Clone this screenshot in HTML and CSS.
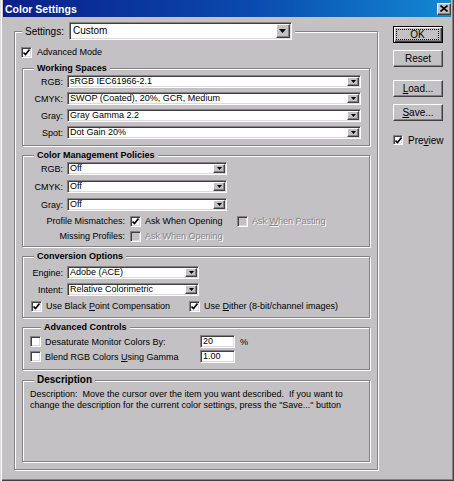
FILE: index.html
```html
<!DOCTYPE html>
<html lang="en">
  <head>
    <meta charset="UTF-8" />
    <title>Color Settings</title>
    <link rel="stylesheet" href="styles.css">
  </head>
  <body>
    <div class="window">
      <div class="titlebar">
        <span class="title">Color Settings</span>
        <span class="close">
          <svg width="8" height="7" viewBox="0 0 8 7"><path d="M0.5 0.5 L7.5 6.5 M7.5 0.5 L0.5 6.5" stroke="#000" stroke-width="1.6" fill="none"/></svg>
        </span>
      </div>

      <div class="dialog">
        <fieldset class="group outer">
          <legend>
            <span>Settings:</span>
            <div class="combo big">
              <span class="value">Custom</span>
              <span class="drop"><svg width="7" height="4" viewBox="0 0 7 4"><path d="M0 0h7L3.5 4z" fill="#000"/></svg></span>
            </div>
          </legend>

          <div class="outer-body">
            <div class="opt advanced">
              <span class="check on"><svg width="7" height="7" viewBox="0 0 7 7"><path d="M0.5 3.5 L2.5 5.5 L6.5 0.5" stroke="#000" stroke-width="1.6" fill="none"/></svg></span>
              <span>Advanced Mode</span>
            </div>

            <fieldset class="group ws">
              <legend>Working Spaces</legend>
              <div class="fields">
                <span class="lbl">RGB:</span>
                <div class="combo"><span class="value">sRGB IEC61966-2.1</span><span class="drop"><svg width="5" height="3" viewBox="0 0 5 3"><path d="M0 0h5L2.5 3z"/></svg></span></div>
                <span class="lbl">CMYK:</span>
                <div class="combo"><span class="value">SWOP (Coated), 20%, GCR, Medium</span><span class="drop"><svg width="5" height="3" viewBox="0 0 5 3"><path d="M0 0h5L2.5 3z"/></svg></span></div>
                <span class="lbl">Gray:</span>
                <div class="combo"><span class="value">Gray Gamma 2.2</span><span class="drop"><svg width="5" height="3" viewBox="0 0 5 3"><path d="M0 0h5L2.5 3z"/></svg></span></div>
                <span class="lbl">Spot:</span>
                <div class="combo"><span class="value">Dot Gain 20%</span><span class="drop"><svg width="5" height="3" viewBox="0 0 5 3"><path d="M0 0h5L2.5 3z"/></svg></span></div>
              </div>
            </fieldset>

            <fieldset class="group cmp">
              <legend>Color Management Policies</legend>
              <div class="fields">
                <span class="lbl">RGB:</span>
                <div class="combo"><span class="value">Off</span><span class="drop"><svg width="5" height="3" viewBox="0 0 5 3"><path d="M0 0h5L2.5 3z"/></svg></span></div>
                <span class="lbl">CMYK:</span>
                <div class="combo"><span class="value">Off</span><span class="drop"><svg width="5" height="3" viewBox="0 0 5 3"><path d="M0 0h5L2.5 3z"/></svg></span></div>
                <span class="lbl">Gray:</span>
                <div class="combo"><span class="value">Off</span><span class="drop"><svg width="5" height="3" viewBox="0 0 5 3"><path d="M0 0h5L2.5 3z"/></svg></span></div>
              </div>
              <div class="policy">
                <span class="lbl">Profile Mismatches:</span>
                <div class="opt">
                  <span class="check on"><svg width="7" height="7" viewBox="0 0 7 7"><path d="M0.5 3.5 L2.5 5.5 L6.5 0.5" stroke="#000" stroke-width="1.6" fill="none"/></svg></span>
                  <span>Ask When Opening</span>
                </div>
                <div class="opt off">
                  <span class="check"></span>
                  <span>Ask <u>W</u>hen Pasting</span>
                </div>
                <span class="lbl">Missing Profiles:</span>
                <div class="opt off">
                  <span class="check"></span>
                  <span>Ask When Opening</span>
                </div>
              </div>
            </fieldset>

            <fieldset class="group conv">
              <legend>Conversion Options</legend>
              <div class="fields">
                <span class="lbl">Engine:</span>
                <div class="combo"><span class="value">Adobe (ACE)</span><span class="drop"><svg width="5" height="3" viewBox="0 0 5 3"><path d="M0 0h5L2.5 3z"/></svg></span></div>
                <span class="lbl">Intent:</span>
                <div class="combo"><span class="value">Relative Colorimetric</span><span class="drop"><svg width="5" height="3" viewBox="0 0 5 3"><path d="M0 0h5L2.5 3z"/></svg></span></div>
              </div>
              <div class="checks">
                <div class="opt bpc">
                  <span class="check on"><svg width="7" height="7" viewBox="0 0 7 7"><path d="M0.5 3.5 L2.5 5.5 L6.5 0.5" stroke="#000" stroke-width="1.6" fill="none"/></svg></span>
                  <span>Use Black <u>P</u>oint Compensation</span>
                </div>
                <div class="opt">
                  <span class="check on"><svg width="7" height="7" viewBox="0 0 7 7"><path d="M0.5 3.5 L2.5 5.5 L6.5 0.5" stroke="#000" stroke-width="1.6" fill="none"/></svg></span>
                  <span>Use <u>D</u>ither (8-bit/channel images)</span>
                </div>
              </div>
            </fieldset>

            <fieldset class="group adv">
              <legend>Advanced Controls</legend>
              <div class="adv-row">
                <div class="opt"><span class="check"></span><span>Desaturate Monitor Colors By:</span></div>
                <span class="field-input">20</span>
                <span class="unit">%</span>
              </div>
              <div class="adv-row">
                <div class="opt"><span class="check"></span><span>Blend RGB Colors <u>U</u>sing Gamma</span></div>
                <span class="field-input">1.00</span>
              </div>
            </fieldset>

            <fieldset class="group desc">
              <legend>Description</legend>
              <div class="desc-text">
                Description:&nbsp; Move the cursor over the item you want described.&nbsp; If you want to<br>
                change the description for the current color settings, press the "Save..." button
              </div>
            </fieldset>
          </div>
        </fieldset>

        <div class="side">
          <button class="btn default"><span class="focus">OK</span></button>
          <button class="btn reset">Reset</button>
          <button class="btn load"><u>L</u>oad...</button>
          <button class="btn save"><u>S</u>ave...</button>
          <div class="opt preview">
            <span class="check on"><svg width="7" height="7" viewBox="0 0 7 7"><path d="M0.5 3.5 L2.5 5.5 L6.5 0.5" stroke="#000" stroke-width="1.6" fill="none"/></svg></span>
            <span>Pre<u>v</u>iew</span>
          </div>
        </div>
      </div>
    </div>
  </body>
</html>
```

FILE: styles.css
```css
body {
  margin: 0;
  background: #c4c1c4;
  font-family: "Liberation Sans", Arial, sans-serif;
  font-size: 9px;
  color: #000;
}

.window {
  width: 454px;
  height: 481px;
  box-sizing: border-box;
  padding: 0 3px 3px 3px;
  background: #c4c1c4;
  box-shadow: inset 1px 0 0 #dcdadc, inset 2px 0 0 #fff,
    inset -1px -1px 0 #404040, inset -2px -2px 0 #858285;
}

.titlebar {
  height: 17px;
  display: flex;
  align-items: center;
  justify-content: space-between;
  background: linear-gradient(to right, #0a1e8a, #0a4aae 55%, #1288d2);
  color: #fff;
}

.title {
  margin-left: 2px;
  font-weight: bold;
  font-size: 10.5px;
}

.close {
  width: 14px;
  height: 12px;
  box-sizing: border-box;
  display: flex;
  align-items: center;
  justify-content: center;
  background: #c4c1c4;
  border: 1px solid;
  border-color: #fff #404040 #404040 #fff;
  box-shadow: inset -1px -1px 0 #858285;
}

.dialog {
  display: flex;
  padding: 5px 0 0 11px;
}

/* group boxes */
.group {
  margin: 0;
  padding: 0;
  min-width: 0;
  border: 1px solid #858285;
  box-shadow: 1px 1px 0 #fff, inset 1px 1px 0 #fff;
}

.group > legend {
  margin-left: 11px;
  padding: 0 3px;
  font-weight: bold;
  line-height: 11px;
  background: #c4c1c4;
}

.outer {
  width: 364px;
  box-sizing: border-box;
}

.outer > legend {
  margin-left: 7px;
  display: flex;
  align-items: center;
  gap: 5px;
  font-weight: normal;
  font-size: 10px;
}

.outer-body {
  padding: 0 7px 7px;
}

.ws,
.cmp,
.conv,
.adv {
  margin-top: 4px;
}

.ws {
  margin-top: 5px;
}

.desc {
  margin-top: 4px;
}

.desc > legend {
  font-size: 10px;
  line-height: 12px;
}

/* combo boxes */
.combo {
  display: flex;
  height: 13px;
  box-sizing: border-box;
  background: #fff;
  border: 1px solid;
  border-color: #858285 #fff #fff #858285;
  box-shadow: inset 1px 1px 0 #404040, inset -1px -1px 0 #dcdadc;
}

.combo .value {
  flex: 1;
  padding-left: 2px;
  line-height: 11px;
  white-space: nowrap;
  overflow: hidden;
}

.drop {
  width: 12px;
  margin: 1px;
  box-sizing: border-box;
  display: flex;
  align-items: center;
  justify-content: center;
  background: #c4c1c4;
  border: 1px solid;
  border-color: #fff #404040 #404040 #fff;
  box-shadow: inset -1px -1px 0 #858285;
}

.combo.big {
  width: 223px;
  height: 18px;
}

.combo.big .value {
  line-height: 16px;
  padding-left: 3px;
}

.combo.big .drop {
  width: 14px;
}

.fields {
  display: grid;
  column-gap: 4px;
  row-gap: 4px;
  align-items: center;
}

.lbl {
  text-align: right;
  white-space: nowrap;
}

.ws .fields {
  grid-template-columns: 40px 294px;
  padding: 1px 0 6px;
}

.cmp .fields {
  grid-template-columns: 40px 160px;
  row-gap: 5px;
  padding-top: 1px;
}

.conv .fields {
  grid-template-columns: 40px 132px;
  padding-top: 4px;
}

/* check boxes */
.opt {
  display: flex;
  align-items: center;
  gap: 4px;
  height: 12px;
  white-space: nowrap;
}

.check {
  width: 11px;
  height: 11px;
  flex: none;
  box-sizing: border-box;
  display: flex;
  align-items: center;
  justify-content: center;
  background: #fff;
  border: 1px solid;
  border-color: #858285 #fff #fff #858285;
  box-shadow: inset 1px 1px 0 #404040, inset -1px -1px 0 #dcdadc;
}

.opt.off {
  color: #858285;
  text-shadow: 1px 1px 0 #fff;
}

.opt.off .check {
  background: #c4c1c4;
}

.advanced {
  margin: 6px 0 0 -1px;
  gap: 5px;
}

.policy {
  display: grid;
  grid-template-columns: 102px 102px auto;
  column-gap: 5px;
  row-gap: 3px;
  align-items: center;
  margin-top: 4px;
  padding-bottom: 4px;
}

.checks {
  display: flex;
  padding: 4px 0 5px 8px;
}

.bpc {
  width: 158px;
}

.adv {
  padding: 2px 0 6px 7px;
}

.adv-row {
  display: flex;
  align-items: center;
  height: 13px;
  margin-top: 2px;
}

.adv-row:first-of-type {
  margin-top: 0;
}

.adv-row .opt {
  width: 170px;
}

.field-input {
  width: 35px;
  height: 13px;
  box-sizing: border-box;
  padding-left: 2px;
  line-height: 11px;
  background: #fff;
  border: 1px solid;
  border-color: #858285 #fff #fff #858285;
  box-shadow: inset 1px 1px 0 #404040, inset -1px -1px 0 #dcdadc;
}

.unit {
  margin-left: 5px;
}

.desc-text {
  height: 75px;
  box-sizing: border-box;
  padding: 3px 7px;
  line-height: 11px;
}

/* right column */
.side {
  width: 50px;
  margin-left: 15px;
  padding-top: 4px;
  display: flex;
  flex-direction: column;
}

.btn {
  width: 50px;
  height: 17px;
  padding: 0;
  font-family: "Liberation Sans", Arial, sans-serif;
  font-size: 10px;
  color: #000;
  background: #c4c1c4;
  border: 1px solid;
  border-color: #fff #404040 #404040 #fff;
  box-shadow: inset -1px -1px 0 #858285;
}

.btn.default {
  border-color: #000;
  box-shadow: inset 1px 1px 0 #fff, inset -1px -1px 0 #404040,
    inset -2px -2px 0 #858285;
}

.focus {
  display: block;
  margin: 2px 3px 2px 2px;
  border: 1px dotted #000;
  line-height: 9px;
}

.reset,
.save {
  margin-top: 7px;
}

.load {
  margin-top: 13px;
}

.preview {
  margin-top: 13px;
  font-size: 10px;
  gap: 5px;
}

.preview .check {
  width: 10px;
  height: 10px;
}
```
